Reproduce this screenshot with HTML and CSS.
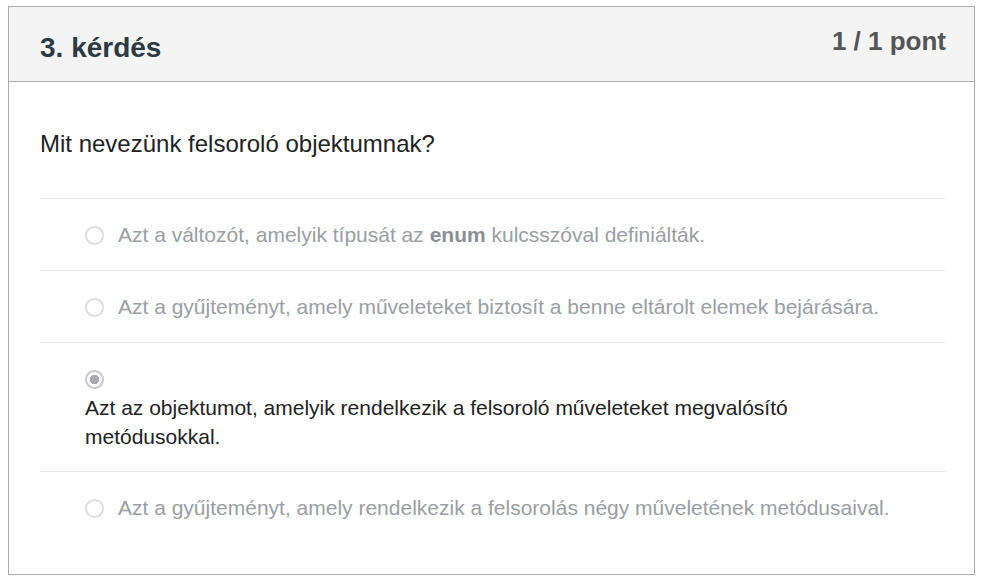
FILE: index.html
```html
<!DOCTYPE html>
<html lang="hu">
<head>
<meta charset="utf-8">
<title>3. kérdés</title>
<link rel="stylesheet" href="styles.css">
</head>
<body>
<div class="card">
  <div class="card-header">
    <h2 class="title">3. kérdés</h2>
    <div class="points">1 / 1 pont</div>
  </div>
  <div class="card-body">
    <p class="question">Mit nevezünk felsoroló objektumnak?</p>
    <ul class="answers">
      <li class="answer">
        <span class="radio"></span><span class="label">Azt a változót, amelyik típusát az <b>enum</b> kulcsszóval definiálták.</span>
      </li>
      <li class="answer">
        <span class="radio"></span><span class="label">Azt a gyűjteményt, amely műveleteket biztosít a benne eltárolt elemek bejárására.</span>
      </li>
      <li class="answer selected">
        <span class="radio checked"></span><span class="label">Azt az objektumot, amelyik rendelkezik a felsoroló műveleteket megvalósító metódusokkal.</span>
      </li>
      <li class="answer">
        <span class="radio"></span><span class="label">Azt a gyűjteményt, amely rendelkezik a felsorolás négy műveletének metódusaival.</span>
      </li>
    </ul>
  </div>
</div>
</body>
</html>
```
FILE: styles.css
```css
html, body {
  margin: 0;
  padding: 0;
  background: #ffffff;
}
body {
  padding: 6px 6px 6px 8px;
  font-family: "Liberation Sans", Arial, sans-serif;
}
.card {
  border: 1px solid #aaaaaa;
  box-sizing: border-box;
  height: 569px;
}
.card-header {
  background: #f4f4f4;
  border-bottom: 1px solid #aaaaaa;
  height: 74px;
  display: flex;
  justify-content: space-between;
  align-items: flex-start;
  padding: 0 28px 0 31px;
}
.title {
  margin: 0;
  padding-top: 24px;
  font-size: 28px;
  line-height: 34px;
  font-weight: bold;
  color: #2d3a44;
}
.points {
  padding-top: 17px;
  font-size: 26px;
  line-height: 34px;
  font-weight: bold;
  color: #555555;
}
.card-body {
  padding: 0 29px 0 31px;
}
.question {
  margin: 47px 0 39px;
  font-size: 24px;
  line-height: 30px;
  color: #222222;
}
.answers {
  list-style: none;
  margin: 0;
  padding: 0;
}
.answer {
  border-top: 1px solid #e8e8e8;
  padding: 21px 30px 20px 45px;
  font-size: 21px;
  line-height: 30px;
  color: #999ea3;
}
.answer.selected {
  color: #222222;
  line-height: 29px;
  padding-bottom: 20px;
}
.answer b {
  color: #8a8f94;
}
.radio {
  display: inline-block;
  box-sizing: border-box;
  width: 19px;
  height: 19px;
  border: 2px solid #dddddd;
  border-radius: 50%;
  vertical-align: -3px;
  margin-right: 14px;
}
.radio.checked {
  border: 2px solid #c8c8cc;
  background: radial-gradient(circle, #a9a9b1 0 4.5px, #ffffff 5px);
}
.label {
  display: inline-block;
}
```
